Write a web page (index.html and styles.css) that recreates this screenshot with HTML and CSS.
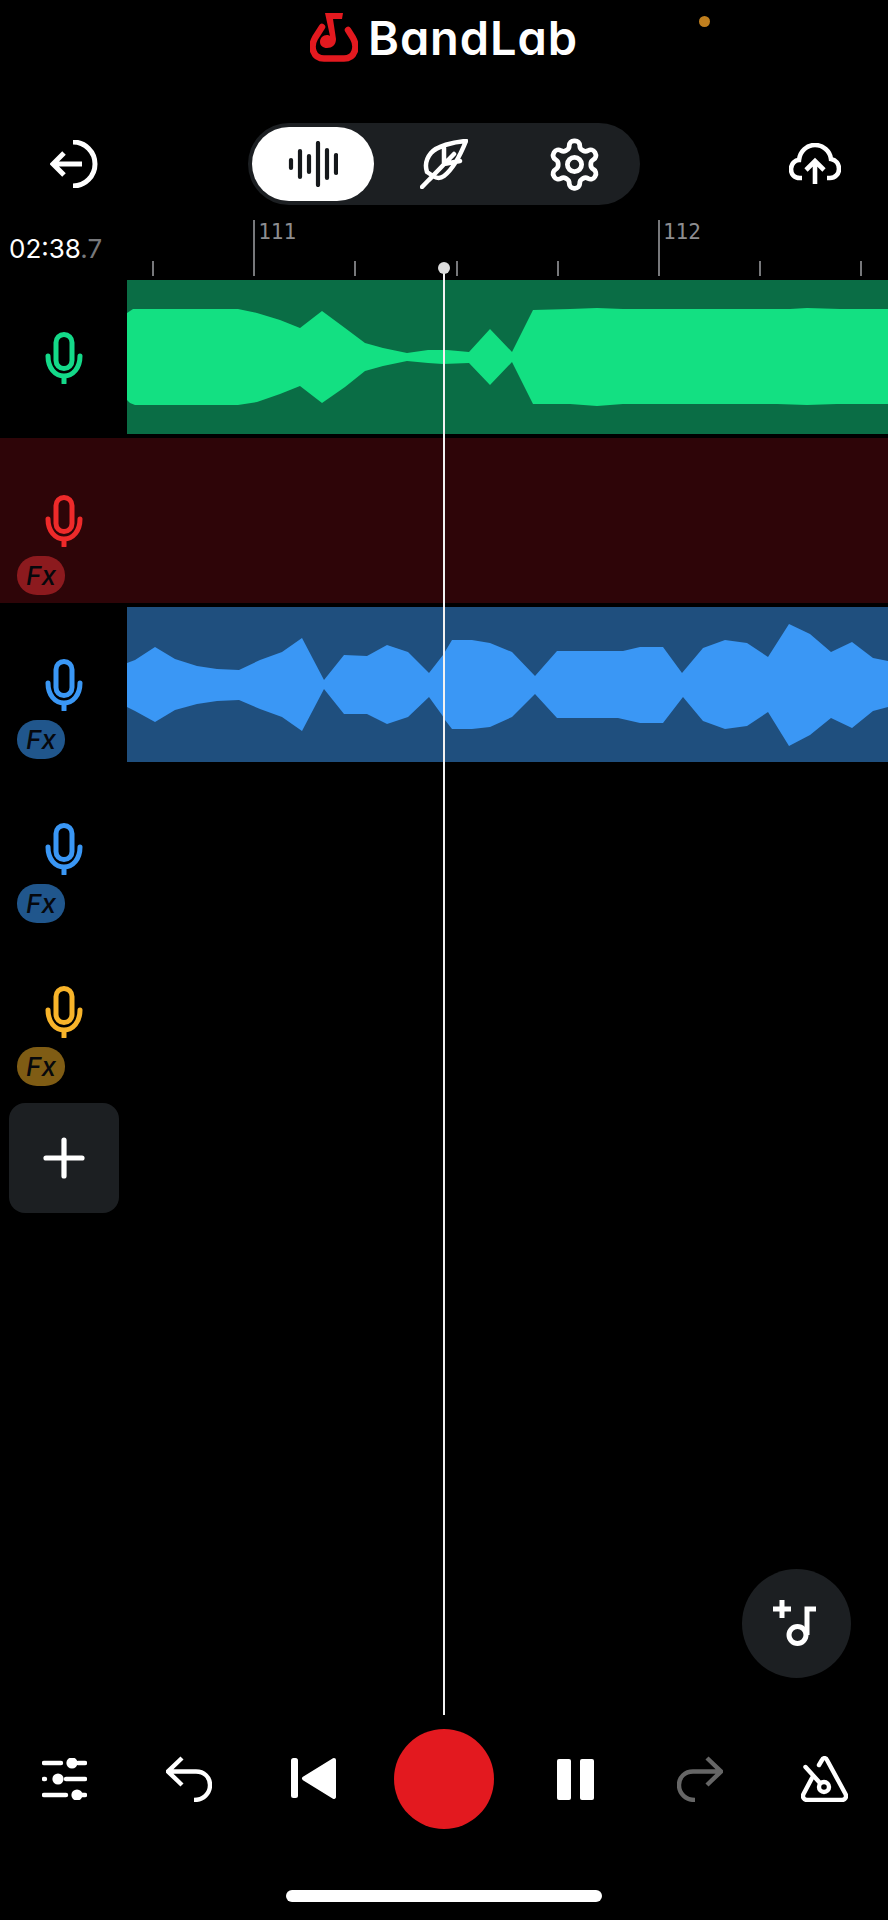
FILE: index.html
```html
<!DOCTYPE html>
<html lang="en">
<head>
<meta charset="utf-8">
<title>BandLab Studio</title>
<link rel="stylesheet" href="styles.css">
</head>
<body>
<svg class="defs" width="0" height="0" aria-hidden="true">
  <symbol id="mic" viewBox="0 0 38 52">
    <rect x="11" y="2.500" width="16" height="34" rx="8" fill="none" stroke="currentColor" stroke-width="5"/>
    <path d="M3 24C3 36 10 44 19 44C28 44 35 36 35 24M19 44V51" fill="none" stroke="currentColor" stroke-width="5" stroke-linecap="round"/>
  </symbol>
</svg>
<div class="app">
  <span class="privacy-dot"></span>

  <div class="logo-row">
    <svg class="logo-mark" viewBox="0 0 48 50" width="48" height="50">
      <path d="M12 14L5 25C0 34 3 45.500 14 45.500H34C45 45.500 48 34 43 25L38 17" fill="none" stroke="#e3191f" stroke-width="6.5" stroke-linecap="round"/>
      <path d="M15 0H33L32 6H23L26 26C26 32 22 35 17 35C13 35 10 32.500 10 29C10 25 13 22 17 22C18 22 19 22 20 23Z" fill="#e3191f"/>
    </svg>
    <span class="logo-text">BandLab</span>
  </div>

  <div class="header">
    <svg class="icon" viewBox="0 0 48 48" width="48" height="48">
      <path d="M23 2A22 22 0 0 1 23 46M32 24H4M14 13L3 24L14 35" fill="none" stroke="#fff" stroke-width="5"/>
    </svg>
    <div class="segment">
      <div class="seg-item seg-active">
        <svg viewBox="0 0 50 46" width="50" height="46">
          <g fill="none" stroke="#15181b" stroke-width="4.200" stroke-linecap="round">
            <path d="M3 19V27M12 10V36M21 15V31M30 2V44M39 9V37M48 14V32"/>
          </g>
        </svg>
      </div>
      <div class="seg-item">
        <svg viewBox="0 0 48 50" width="48" height="50">
          <path d="M46 2C33 3 17 7 11 14C6 20 5 27 7 33L13 37L9 41M46 2C40 17 33 30 24 37C20 40 16 39 13 37M2 48L34 15M24 9V25M24 25L40 22" fill="none" stroke="#fff" stroke-width="4.500" stroke-linecap="round" stroke-linejoin="round"/>
        </svg>
      </div>
      <div class="seg-item">
        <svg viewBox="0 0 24 24" width="57" height="57">
          <path d="M12.22 2h-.44a2 2 0 0 0-2 2v.18a2 2 0 0 1-1 1.73l-.43.25a2 2 0 0 1-2 0l-.15-.08a2 2 0 0 0-2.73.73l-.22.38a2 2 0 0 0 .73 2.73l.15.1a2 2 0 0 1 1 1.72v.51a2 2 0 0 1-1 1.74l-.15.09a2 2 0 0 0-.73 2.73l.22.38a2 2 0 0 0 2.73.73l.15-.08a2 2 0 0 1 2 0l.43.25a2 2 0 0 1 1 1.73V20a2 2 0 0 0 2 2h.44a2 2 0 0 0 2-2v-.18a2 2 0 0 1 1-1.73l.43-.25a2 2 0 0 1 2 0l.15.08a2 2 0 0 0 2.73-.73l.22-.39a2 2 0 0 0-.73-2.73l-.15-.08a2 2 0 0 1-1-1.74v-.5a2 2 0 0 1 1-1.74l.15-.09a2 2 0 0 0 .73-2.73l-.22-.38a2 2 0 0 0-2.73-.73l-.15.08a2 2 0 0 1-2 0l-.43-.25a2 2 0 0 1-1-1.73V4a2 2 0 0 0-2-2z" fill="none" stroke="#fff" stroke-width="2"/>
          <circle cx="12" cy="12" r="3" fill="none" stroke="#fff" stroke-width="2"/>
        </svg>
      </div>
    </div>
    <svg class="icon" viewBox="0 0 52 42" width="52" height="42">
      <path d="M13 35H11C5 35 2 31 2 26C2 21 6 17 10 17C11 8 18 2 26 2C34 2 41 8 42 16C47 17 50 21 50 26C50 31 46 35 41 35H38M26 41V19M17 27L26 18L35 27" fill="none" stroke="#fff" stroke-width="4.600"/>
    </svg>
  </div>

  <div class="ruler">
    <div class="time">02:38<span class="time-frac">.7</span></div>
    <div class="tick"></div>
    <div class="tick tick-major"><span class="bar-num">111</span></div>
    <div class="tick"></div>
    <div class="tick"></div>
    <div class="tick"></div>
    <div class="tick tick-major"><span class="bar-num">112</span></div>
    <div class="tick"></div>
    <div class="tick"></div>
  </div>

  <div class="tracks">
    <div class="row row-first green">
      <div class="head">
        <svg class="mic"><use href="#mic"/></svg>
      </div>
      <div class="clip clip-green">
        <svg viewBox="127 280 761 154" width="761" height="154">
          <path fill="#13e082" d="M127 313L133 309L238 309L257 313L280 320L300 328L322 311L345 328L365 343L383 348L407 353L428 350L447 350L469 352L490 329L512 352L533 310L570 309L597 308L623 309L790 309L807 308L840 309L888 309L888 404L837 404L807 405L777 404L623 404L597 406L570 404L533 404L512 362L490 385L469 363L443 364L428 363L407 361L383 366L365 371L345 387L322 403L300 386L280 394L257 402L238 405L135 405L130 403L127 400Z"/>
        </svg>
      </div>
    </div>

    <div class="row row-selected red">
      <div class="head">
        <svg class="mic"><use href="#mic"/></svg>
        <span class="fx">Fx</span>
      </div>
    </div>

    <div class="row blue">
      <div class="head">
        <svg class="mic"><use href="#mic"/></svg>
        <span class="fx">Fx</span>
      </div>
      <div class="clip clip-blue">
        <svg viewBox="127 607 761 155" width="761" height="155">
          <path fill="#3a97f5" d="M127 663L135 660L155 647L175 659L197 666L217 669L239 670L260 660L282 652L302 638L324 680L344 655L367 656L387 645L408 652L429 673L443 655L452 640L472 640L490 643L512 652L535 676L557 651L623 651L640 647L663 647L682 673L703 648L725 640L747 643L768 657L789 624L810 634L831 652L852 642L873 658L888 661L888 707L873 711L852 728L831 718L810 735L789 746L768 712L747 726L725 729L703 721L683 697L663 723L640 723L618 718L557 718L535 694L512 717L490 727L472 729L452 729L445 720L442 715L429 697L408 717L387 724L367 714L344 714L324 689L302 731L282 717L260 709L239 700L217 701L197 704L175 710L155 722L135 711L127 707Z"/>
        </svg>
      </div>
    </div>

    <div class="row blue">
      <div class="head">
        <svg class="mic"><use href="#mic"/></svg>
        <span class="fx">Fx</span>
      </div>
    </div>

    <div class="row yellow">
      <div class="head">
        <svg class="mic"><use href="#mic"/></svg>
        <span class="fx">Fx</span>
      </div>
    </div>
  </div>

  <div class="add-track">
    <svg viewBox="0 0 44 44" width="44" height="44">
      <path d="M22 4V40M4 22H40" fill="none" stroke="#fff" stroke-width="5.200" stroke-linecap="round"/>
    </svg>
  </div>

  <div class="playhead"></div>

  <div class="fab">
    <svg viewBox="0 0 46 46" width="46" height="46">
      <path d="M9 0V18M0 9H18M34 35V9H43" fill="none" stroke="#fff" stroke-width="5"/>
      <circle cx="24.500" cy="35" r="8.500" fill="none" stroke="#fff" stroke-width="5"/>
    </svg>
  </div>

  <div class="controls">
    <svg viewBox="0 0 45 42" width="45" height="42">
      <g fill="none" stroke="#fff" stroke-width="4.400" stroke-linecap="round">
        <path d="M2 5H19M36 5H43M2 21H3M24 21H43M2 37H24M40 37H43"/>
      </g>
      <g fill="#fff"><circle cx="30" cy="5" r="5.600"/><circle cx="16" cy="21" r="5.600"/><circle cx="35" cy="37" r="5.600"/></g>
    </svg>
    <svg viewBox="0 0 46 46" width="46" height="46">
      <path d="M16 2L2 15.500L16 29M2 15.500H30C38 15.500 44 21 44 29C44 38 37 44 28 44" fill="none" stroke="#fff" stroke-width="4.400"/>
    </svg>
    <svg viewBox="0 0 46 42" width="46" height="42">
      <rect x="0" y="0" width="7" height="40" rx="2.500" fill="#fff"/>
      <path d="M43 2L13 20.500L43 39Z" fill="#fff" stroke="#fff" stroke-width="4" stroke-linejoin="round"/>
    </svg>
    <div class="record"></div>
    <div class="pause"><span></span><span></span></div>
    <svg viewBox="0 0 46 46" width="46" height="46">
      <path d="M30 2L44 15.500L30 29M44 15.500H16C8 15.500 2 21 2 29C2 38 9 44 18 44" fill="none" stroke="#666" stroke-width="4.400"/>
    </svg>
    <svg viewBox="0 0 47 46" width="47" height="46">
      <path d="M18 9L21 4C22 1.500 25 1.500 26 4L44.500 38C46 41 44 44 41 44H6C3 44 1 41 2.500 38L11 22" fill="none" stroke="#fff" stroke-width="4.400" stroke-linejoin="round" stroke-linecap="round"/>
      <path d="M4.500 11L19 27" fill="none" stroke="#fff" stroke-width="4.400" stroke-linecap="round"/>
      <circle cx="23" cy="31" r="5" fill="none" stroke="#fff" stroke-width="4.400"/>
    </svg>
  </div>

  <div class="home-bar"></div>
</div>
</body>
</html>
```
FILE: styles.css
```css
* { box-sizing: border-box; }

html, body {
  margin: 0;
  padding: 0;
  background: #000;
}

.defs { position: absolute; }

.app {
  position: relative;
  width: 888px;
  height: 1920px;
  display: flex;
  flex-direction: column;
  overflow: hidden;
  background: #000;
  color: #fff;
  font-family: Inter, "Liberation Sans", sans-serif;
}

.privacy-dot {
  position: absolute;
  left: 699px;
  top: 16px;
  width: 11px;
  height: 11px;
  border-radius: 50%;
  background: #c07f1e;
}

.logo-row {
  height: 70px;
  padding: 13px 0 0 310px;
  display: flex;
  align-items: flex-start;
  gap: 10px;
}

.logo-mark { flex: none; }

.logo-text {
  font-size: 47px;
  font-weight: 600;
  line-height: 50px;
  font-feature-settings: "cv11";
  letter-spacing: 0.9px;
}

.header {
  margin-top: 53px;
  height: 82px;
  padding: 0 47px 0 50px;
  display: flex;
  align-items: center;
  justify-content: space-between;
}

.icon { flex: none; }

.segment {
  width: 392px;
  height: 82px;
  padding: 4px;
  display: flex;
  gap: 9px;
  border-radius: 41px;
  background: #1c1f22;
}

.seg-item {
  width: 122px;
  height: 74px;
  display: flex;
  align-items: center;
  justify-content: center;
  border-radius: 37px;
}

.seg-active { background: #fff; }

.ruler {
  margin-top: 15px;
  height: 56px;
  display: flex;
  align-items: flex-end;
}

.time {
  flex: 0 0 152px;
  align-self: flex-end;
  padding: 0 0 12px 9px;
  font-size: 26px;
  line-height: 30px;
  white-space: nowrap;
}

.time-frac { color: #77787b; }

.tick {
  flex: 0 0 101.2px;
  height: 15px;
  border-left: 2px solid #77787b;
}

.tick-major {
  height: 56px;
  padding: 1px 0 0 3px;
}

.bar-num {
  display: block;
  font-family: "DejaVu Sans Mono", monospace;
  font-size: 21px;
  line-height: 22px;
  color: #8d8d90;
}

.tracks {
  margin-top: 4px;
  display: flex;
  flex-direction: column;
}

.row {
  height: 163.5px;
  display: flex;
}

.row-first { height: 158px; }

.row-selected {
  height: 165px;
  margin-bottom: 4px;
  background: #2e0508;
}

.row-selected .head { padding-top: 57px; }

.green { color: #14d989; }
.red { color: #ee2a2a; }
.blue { color: #3a97f5; }
.yellow { color: #f8b42a; }

.head {
  flex: 0 0 127px;
  padding-top: 52px;
  display: flex;
  flex-direction: column;
}

.mic {
  flex: none;
  width: 38px;
  height: 52px;
  margin-left: 45px;
}

.fx {
  width: 48px;
  height: 39px;
  margin: 9px 0 0 17px;
  display: flex;
  align-items: center;
  justify-content: center;
  border-radius: 20px / 19px;
  font-family: Inter, "Liberation Sans", sans-serif;
  font-style: italic;
  font-weight: 500;
  font-size: 26px;
  line-height: 39px;
  color: #06080c;
}

.red .fx { background: #8c1a1e; }
.blue .fx { background: #20568c; }
.yellow .fx { background: #7f5c14; }

.clip {
  flex: 1;
  overflow: hidden;
}

.clip svg { display: block; }

.clip-green {
  height: 154px;
  background: #0a6d45;
}

.clip-blue {
  height: 155px;
  background: #1f4f7e;
}

.add-track {
  margin: 5.5px 0 0 9px;
  width: 110px;
  height: 110px;
  display: flex;
  align-items: center;
  justify-content: center;
  border-radius: 16px;
  background: #1c1f22;
}

.playhead {
  position: absolute;
  left: 443px;
  top: 268px;
  width: 2px;
  height: 1447px;
  background: #f2f2f2;
}

.playhead::before {
  content: "";
  position: absolute;
  left: -5px;
  top: -6px;
  width: 12px;
  height: 12px;
  border-radius: 50%;
  background: #dcdcdc;
}

.fab {
  position: absolute;
  left: 742px;
  top: 1569px;
  width: 109px;
  height: 109px;
  padding: 31px 0 0 31px;
  border-radius: 50%;
  background: #1c1f22;
}

.fab svg { display: block; }

.controls {
  margin-top: auto;
  margin-bottom: 61px;
  padding-left: 2px;
  display: grid;
  grid-template-columns: 125px 124px 126px 134px 128px 122px 127px;
  justify-items: center;
  align-items: center;
}

.record {
  width: 100px;
  height: 100px;
  border-radius: 50%;
  background: #e3191f;
}

.pause {
  display: flex;
  gap: 9px;
}

.pause span {
  width: 14px;
  height: 41px;
  border-radius: 2px;
  background: #fff;
}

.home-bar {
  flex: none;
  width: 316px;
  height: 12px;
  margin: 0 0 18px 286px;
  border-radius: 6px;
  background: #fff;
}
```
